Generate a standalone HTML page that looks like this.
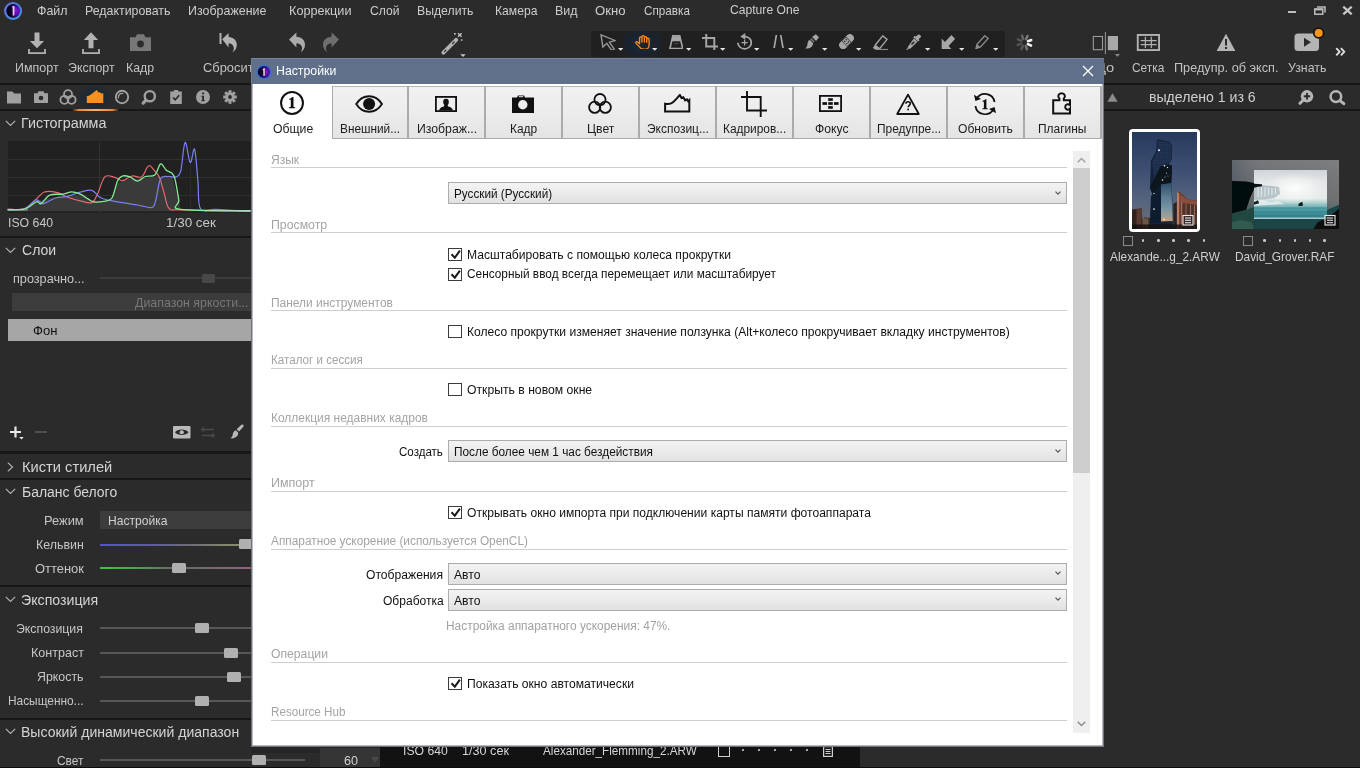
<!DOCTYPE html>
<html><head><meta charset="utf-8"><title>Capture One</title>
<style>
*{box-sizing:border-box;margin:0;padding:0}
html,body{width:1360px;height:768px;overflow:hidden;background:#2b2b2b}
body{font-family:"Liberation Sans",sans-serif;position:relative}
.a{position:absolute;display:block}
.t{position:absolute;white-space:nowrap;line-height:1;transform-origin:0 0}
</style></head>
<body>
<svg class="a" style="left:2.7px;top:0.9px;" width="20" height="20" viewBox="0 0 20 20"><defs><radialGradient id="lg" cx="0.68" cy="0.5" r="0.62"><stop offset="0" stop-color="#8a10d8"/><stop offset="0.4" stop-color="#5a10b8"/><stop offset="0.75" stop-color="#160c50"/><stop offset="1" stop-color="#050418"/></radialGradient>
<linearGradient id="lr" x1="0" y1="0" x2="1" y2="1"><stop offset="0" stop-color="#7a6ad8"/><stop offset=".45" stop-color="#4a80e8"/><stop offset="1" stop-color="#4a9ad8"/></linearGradient></defs>
<circle cx="10" cy="10" r="9" fill="url(#lr)"/><circle cx="10.200" cy="9.800" r="6.900" fill="url(#lg)"/><ellipse cx="7.300" cy="10.200" rx="3.600" ry="5" fill="#04030f" opacity=".8"/>
<path d="M9 5.600c1.100-.9 2.300-.9 2.600 0l-.3 9h-1.600l-.1-7.500z" fill="#f2c4f4"/></svg>
<div class="t" style="left:36.8px;top:3.8px;font-size:13.5px;color:#cdcdcd;transform:scaleX(0.9182);">Файл</div>
<div class="t" style="left:85.3px;top:3.8px;font-size:13.5px;color:#cdcdcd;transform:scaleX(0.9166);">Редактировать</div>
<div class="t" style="left:188.3px;top:3.8px;font-size:13.5px;color:#cdcdcd;transform:scaleX(0.9230);">Изображение</div>
<div class="t" style="left:289.2px;top:3.8px;font-size:13.5px;color:#cdcdcd;transform:scaleX(0.9384);">Коррекции</div>
<div class="t" style="left:370.3px;top:3.8px;font-size:13.5px;color:#cdcdcd;transform:scaleX(0.8972);">Слой</div>
<div class="t" style="left:417.3px;top:3.8px;font-size:13.5px;color:#cdcdcd;transform:scaleX(0.9067);">Выделить</div>
<div class="t" style="left:495.3px;top:3.8px;font-size:13.5px;color:#cdcdcd;transform:scaleX(0.8998);">Камера</div>
<div class="t" style="left:555.3px;top:3.8px;font-size:13.5px;color:#cdcdcd;transform:scaleX(0.9203);">Вид</div>
<div class="t" style="left:595.2px;top:3.8px;font-size:13.5px;color:#cdcdcd;transform:scaleX(0.9746);">Окно</div>
<div class="t" style="left:643.8px;top:3.8px;font-size:13.5px;color:#cdcdcd;transform:scaleX(0.8666);">Справка</div>
<div class="t" style="left:730.3px;top:3.2px;font-size:13.5px;color:#cdcdcd;transform:scaleX(0.8986);">Capture One</div>
<div class="a" style="left:1288px;top:11px;width:8px;height:2px;background:#bdbdbd;"></div>
<svg class="a" style="left:1314px;top:5.5px;" width="12" height="9" viewBox="0 0 12 9"><path d="M3 1h8v5.500" fill="none" stroke="#bdbdbd" stroke-width="1.500"/><rect x=".75" y="3" width="8" height="5.200" fill="none" stroke="#bdbdbd" stroke-width="1.500"/><rect x=".75" y="2.600" width="8" height="1.800" fill="#bdbdbd"/></svg>
<svg class="a" style="left:1341.5px;top:5.5px;" width="11" height="9" viewBox="0 0 11 9"><path d="M1.3 0.7l8.400 7.600M9.700 0.700l-8.400 7.600" stroke="#c6c6c6" stroke-width="2.300" fill="none"/></svg>
<div class="t" style="left:14.6px;top:60.5px;font-size:13.5px;color:#c2c2c2;transform:scaleX(0.9236);">Импорт</div>
<div class="t" style="left:67.6px;top:60.5px;font-size:13.5px;color:#c2c2c2;transform:scaleX(0.9183);">Экспорт</div>
<div class="t" style="left:126.3px;top:60.5px;font-size:13.5px;color:#c2c2c2;transform:scaleX(0.9092);">Кадр</div>
<div class="t" style="left:202.5px;top:60.5px;font-size:13.5px;color:#c2c2c2;transform:scaleX(0.9538);">Сбросить</div>
<div class="t" style="left:1096.1px;top:60.5px;font-size:13.5px;color:#c2c2c2;transform:scaleX(1.0861);">До</div>
<div class="t" style="left:1131.8px;top:60.5px;font-size:13.5px;color:#c2c2c2;transform:scaleX(0.8808);">Сетка</div>
<div class="t" style="left:1173.5px;top:60.5px;font-size:13.5px;color:#c2c2c2;transform:scaleX(0.9397);">Предупр. об эксп.</div>
<div class="t" style="left:1288.3px;top:60.5px;font-size:13.5px;color:#c2c2c2;transform:scaleX(0.9184);">Узнать</div>
<svg class="a" style="left:28px;top:32px;" width="18" height="23" viewBox="0 0 18 23"><path d="M6.5 0.5h5v8.5h4.6L9 16.3 1.9 9h4.6z" fill="#b2b2b2"/><path d="M1 17v4.2h16V17" fill="none" stroke="#b2b2b2" stroke-width="1.8"/></svg>
<svg class="a" style="left:82px;top:32px;" width="18" height="23" viewBox="0 0 18 23"><path d="M9 0.3l7.1 7.6h-4.6v8.4h-5V7.9H1.9z" fill="#b2b2b2"/><path d="M1 17v4.2h16V17" fill="none" stroke="#b2b2b2" stroke-width="1.8"/></svg>
<svg class="a" style="left:130px;top:34px;" width="21" height="17" viewBox="0 0 21 17"><path d="M0 3.2h5.5l1.6-2.9h6.8l1.6 2.9H21V17H0z" fill="#777"/><circle cx="10.5" cy="10" r="3.4" fill="#2b2b2b"/><circle cx="10.5" cy="10" r="1.9" fill="#777" opacity="0"/></svg>
<svg class="a" style="left:219px;top:32px;" width="19" height="21" viewBox="0 0 19 21"><rect x="0.5" y="1" width="2" height="11" fill="#b2b2b2"/><path d="M3.2 7.2L9.6 1v4c5 .3 8.2 3.4 8.2 7.8 0 3.6-2 6.3-4.4 7.6 1.5-2.2 1.9-4.6.8-6.500-1-1.800-2.600-2.500-4.600-2.600v4.100z" fill="#b2b2b2"/></svg>
<svg class="a" style="left:288px;top:32px;" width="19" height="21" viewBox="0 0 19 21"><path d="M1 7.400L8.400 0.600v4.200c5.500.3 8.600 3.600 8.600 7.900 0 3.500-1.900 6.100-4.300 7.400 1.500-2.300 1.800-4.600.7-6.400-1-1.700-2.700-2.400-5-2.500v4.200z" fill="#ababab"/></svg>
<svg class="a" style="left:321px;top:32px;" width="19" height="21" viewBox="0 0 19 21"><path d="M18 7.400L10.600 0.600v4.200C5.100 5.100 2 8.400 2 12.700c0 3.500 1.900 6.100 4.300 7.400-1.500-2.300-1.800-4.600-.7-6.400 1-1.700 2.700-2.400 5-2.500v4.200z" fill="#6e6e6e"/></svg>
<svg class="a" style="left:440px;top:31px;" width="30" height="26" viewBox="0 0 30 26"><path d="M3.400 21.700L16.200 8.900" stroke="#b2b2b2" stroke-width="3.900" stroke-linecap="round"/><path d="M4.600 20.500l1.300-1.300M12.600 12.500l1.600-1.600" stroke="#2b2b2b" stroke-width="1.200" stroke-linecap="round"/><path d="M18 2.200l3.600 3.600M21.600 2.200L18 5.800" stroke="#c4c4c4" stroke-width="1.300"/><rect x="14" y="2" width="1.700" height="1.700" fill="#c0c0c0"/><rect x="20.800" y="8.200" width="1.700" height="1.700" fill="#a8a8a8"/><path d="M20.300 23.300h5.400l-2.700 2.700z" fill="#c8c8c8"/></svg>
<div class="a" style="left:591px;top:31px;width:414px;height:26px;background:#202020;border-radius:3px"></div>
<div class="a" style="left:624px;top:31px;width:37px;height:26px;background:radial-gradient(ellipse at 50% 50%,#172838 0%,#182432 45%,rgba(32,32,32,0) 100%)"></div>
<svg class="a" style="left:617.9px;top:48px;" width="5.4" height="2.8" viewBox="0 0 5.4 2.8"><path d="M0 0h5.400L2.700 2.800z" fill="#e6e6e6"/></svg>
<svg class="a" style="left:651.98px;top:48px;" width="5.4" height="2.8" viewBox="0 0 5.4 2.8"><path d="M0 0h5.400L2.700 2.800z" fill="#e6e6e6"/></svg>
<svg class="a" style="left:686.06px;top:48px;" width="5.4" height="2.8" viewBox="0 0 5.4 2.8"><path d="M0 0h5.400L2.700 2.800z" fill="#e6e6e6"/></svg>
<svg class="a" style="left:720.14px;top:48px;" width="5.4" height="2.8" viewBox="0 0 5.4 2.8"><path d="M0 0h5.400L2.700 2.800z" fill="#e6e6e6"/></svg>
<svg class="a" style="left:754.22px;top:48px;" width="5.4" height="2.8" viewBox="0 0 5.4 2.8"><path d="M0 0h5.400L2.700 2.800z" fill="#e6e6e6"/></svg>
<svg class="a" style="left:788.3px;top:48px;" width="5.4" height="2.8" viewBox="0 0 5.4 2.8"><path d="M0 0h5.400L2.700 2.800z" fill="#e6e6e6"/></svg>
<svg class="a" style="left:822.38px;top:48px;" width="5.4" height="2.8" viewBox="0 0 5.4 2.8"><path d="M0 0h5.400L2.700 2.800z" fill="#e6e6e6"/></svg>
<svg class="a" style="left:856.46px;top:48px;" width="5.4" height="2.8" viewBox="0 0 5.4 2.8"><path d="M0 0h5.400L2.700 2.800z" fill="#e6e6e6"/></svg>
<svg class="a" style="left:924.6199999999999px;top:48px;" width="5.4" height="2.8" viewBox="0 0 5.4 2.8"><path d="M0 0h5.400L2.700 2.800z" fill="#e6e6e6"/></svg>
<svg class="a" style="left:958.6999999999999px;top:48px;" width="5.4" height="2.8" viewBox="0 0 5.4 2.8"><path d="M0 0h5.400L2.700 2.800z" fill="#e6e6e6"/></svg>
<svg class="a" style="left:992.78px;top:48px;" width="5.4" height="2.8" viewBox="0 0 5.4 2.8"><path d="M0 0h5.400L2.700 2.800z" fill="#e6e6e6"/></svg>
<svg class="a" style="left:600px;top:33.7px" width="16.00" height="16.60" viewBox="1 0.500 15.500 18.500" preserveAspectRatio="none"><path d="M2 1.500l13.500 6.300-5.400 1.700 4.700 7.700-2.500 1.500-4.700-7.800-3.800 4.100z" fill="none" stroke="#959595" stroke-width="1.400" stroke-linejoin="miter"/></svg>
<svg class="a" style="left:634.6px;top:34.6px" width="15.20" height="14.70" viewBox="0.300 0.300 14 14.400" preserveAspectRatio="none"><path d="M4.500 9V3.200a1.100 1.100 0 0 1 2.200 0V7.200M6.700 3.400V2.100a1.100 1.100 0 0 1 2.200 0V7.200M8.900 2.900a1.100 1.100 0 0 1 2.200 0V7.400M11.100 4.400a1.100 1.100 0 0 1 2.200 0V10c0 2.500-1.500 4.200-3.800 4.200H8c-1.600 0-2.600-.8-3.400-2L1.200 8.200c-.6-1 .8-1.900 1.600-1L4.500 9" fill="#1a2430" stroke="#f58a1f" stroke-width="1.250" stroke-linejoin="round" stroke-linecap="round"/></svg>
<svg class="a" style="left:668.7px;top:34.6px" width="14.60" height="14.40" viewBox="0 0 17 17.500" preserveAspectRatio="none"><path d="M4.500 1h8l3.500 15.500H1z" fill="none" stroke="#a6a6a6" stroke-width="1.900"/><path d="M4.300 1.500h8.400l1.400 6H2.900z" fill="#a6a6a6"/><path d="M6 10.500h5" stroke="#555" stroke-width="1"/></svg>
<svg class="a" style="left:701.9px;top:33.7px" width="16.10" height="16.60" viewBox="0 0 19 20.500" preserveAspectRatio="none"><path d="M5 0v15.500h14M0 5h14.500v15.500" fill="none" stroke="#a6a6a6" stroke-width="2.300"/></svg>
<svg class="a" style="left:737px;top:33.3px" width="15.20" height="16.90" viewBox="0.500 0 17 20.500" preserveAspectRatio="none"><path d="M9 4.200a7.500 7.500 0 1 1-7.500 7.500" fill="none" stroke="#a6a6a6" stroke-width="2"/><path d="M9.800 0v8.300L4.300 4.100z" fill="#a6a6a6"/><path d="M9 8.300v6.800M5.600 11.700h6.800" stroke="#a6a6a6" stroke-width="1.400"/></svg>
<svg class="a" style="left:772.6px;top:34.5px" width="11.20" height="13.40" viewBox="0 0 12.500 16.500" preserveAspectRatio="none"><path d="M3.800 0L1.200 16.500M8.600 0l2.700 16.500" stroke="#a6a6a6" stroke-width="1.900" fill="none"/></svg>
<svg class="a" style="left:805.3px;top:34.1px" width="14.20" height="14.70" viewBox="0 0 16.500 17" preserveAspectRatio="none"><path d="M12.600 0.200l3.600 3.600-3.300 4.400-4.700-4.700z" fill="#a6a6a6"/><path d="M7.300 4.700l3.900 3.900-1.300 1.300-3.900-3.900z" fill="#777"/><path d="M5.400 6.600l3.900 3.900c.2 2.300-.8 4-2.700 5-1.800 1-4.300 1.700-6.400.9 1.600-.7 2.200-1.700 2.500-3.600.3-2.300.6-5 2.700-6.200z" fill="#a6a6a6"/></svg>
<svg class="a" style="left:839px;top:33.7px" width="15.00" height="15.30" viewBox="0 0 18 18" preserveAspectRatio="none"><g transform="rotate(-45 9 9)"><rect x="-1.500" y="4.200" width="21" height="9.600" rx="4.800" fill="#a6a6a6"/><rect x="5.200" y="4.200" width="7.600" height="9.600" fill="#3a3a3a"/><rect x="5.900" y="5" width="6.200" height="8" fill="#a6a6a6"/><circle cx="7.700" cy="7.200" r=".95" fill="#333"/><circle cx="10.400" cy="7.200" r=".95" fill="#333"/><circle cx="7.700" cy="10.800" r=".95" fill="#333"/><circle cx="10.400" cy="10.800" r=".95" fill="#333"/></g></svg>
<svg class="a" style="left:872px;top:34.5px" width="16.30" height="15.70" viewBox="0 0 18 17.300" preserveAspectRatio="none"><path d="M11.800 1l4.900 3.800-8.300 10.300-4.900-3.800z" fill="none" stroke="#a6a6a6" stroke-width="1.500"/><path d="M3.500 11.300l4.900 3.800-1 1.200H3.800L.8 14z" fill="#a6a6a6"/><path d="M5 16.300h13" stroke="#8a8a8a" stroke-width="1.900"/></svg>
<svg class="a" style="left:905.7px;top:33.7px" width="16.40" height="16.50" viewBox="0 0 18 20.300" preserveAspectRatio="none"><path d="M13.200.9c1.500-1.200 4.200 1.500 3 3l-2.300 2.700 1 1-1.700 1.700-5.300-5.300 1.700-1.700 1 1z" fill="#a6a6a6"/><path d="M8.600 5.600l4 4-7.700 8.200-2.600.8-1.300 1.600-.9-.9 1.500-1.400.7-2.600z" fill="#a6a6a6"/><path d="M6 13l3.200-3.400" stroke="#222" stroke-width="1.600"/></svg>
<svg class="a" style="left:940.7px;top:34.7px" width="14.30" height="14.50" viewBox="0 0 17 16" preserveAspectRatio="none"><path d="M16.800 4.200L9 12l3.800 3.800H.8V3.800l3.800 3.800L12.400 0z" fill="#a6a6a6"/></svg>
<svg class="a" style="left:974.6px;top:35px" width="14.40" height="14.20" viewBox="0 0 18 19" preserveAspectRatio="none"><path d="M12.200 1l4.300 3.500-9.700 11.600-5.600 2.200 1.300-5.800z" fill="none" stroke="#8c8c8c" stroke-width="1.700"/><path d="M1.200 18.300l1.300-5.800 4.300 3.600z" fill="#8c8c8c"/><path d="M8 7.500l3.500 2.800-2.800 3.400-3.500-2.800z" fill="#333" opacity="0"/></svg>
<svg class="a" style="left:1016px;top:34px;" width="17" height="17" viewBox="0 0 17 17"><g transform="translate(8.500 8.500)"><rect x="2.600" y="-1.250" width="5.800" height="2.500" rx="1" fill="#f2f2f2" opacity="1" transform="rotate(-20)"/><rect x="2.600" y="-1.250" width="5.800" height="2.500" rx="1" fill="#f2f2f2" opacity="1" transform="rotate(25)"/><rect x="2.600" y="-1.250" width="5.800" height="2.500" rx="1" fill="#f2f2f2" opacity="0.35" transform="rotate(70)"/><rect x="2.600" y="-1.250" width="5.800" height="2.500" rx="1" fill="#f2f2f2" opacity="0.22" transform="rotate(115)"/><rect x="2.600" y="-1.250" width="5.800" height="2.500" rx="1" fill="#f2f2f2" opacity="0.2" transform="rotate(160)"/><rect x="2.600" y="-1.250" width="5.800" height="2.500" rx="1" fill="#f2f2f2" opacity="0.22" transform="rotate(205)"/><rect x="2.600" y="-1.250" width="5.800" height="2.500" rx="1" fill="#f2f2f2" opacity="0.3" transform="rotate(250)"/><rect x="2.600" y="-1.250" width="5.800" height="2.500" rx="1" fill="#f2f2f2" opacity="0.4" transform="rotate(295)"/></g></svg>
<svg class="a" style="left:1092px;top:31px;" width="29" height="27" viewBox="0 0 29 27"><rect x="1.300" y="5.500" width="9.200" height="13.200" fill="none" stroke="#9c9c9c" stroke-width="1.100"/><rect x="15.800" y="5" width="10.200" height="14.200" fill="#a8a8a8"/><path d="M13.400 0.900v22.300" stroke="#8e8e8e" stroke-width="1.100"/><path d="M22.800 23h5.200l-2.600 2.800z" fill="#8a8a8a"/></svg>
<svg class="a" style="left:1136px;top:33px;" width="25" height="19" viewBox="0 0 25 19"><rect x="1.750" y="1.950" width="21.300" height="15.100" fill="none" stroke="#b2b2b2" stroke-width="1.900"/><path d="M4.700 7.700h15.900M4.700 11.600h15.900M9.400 3.800v11.200M15.300 3.800v11.200" stroke="#b2b2b2" stroke-width="1.200" fill="none"/></svg>
<svg class="a" style="left:1216px;top:33px;" width="20" height="19" viewBox="0 0 20 19"><path d="M10 .8L19.400 18H.6z" fill="#b4b4b4"/><rect x="9" y="6" width="2" height="6.500" fill="#2b2b2b"/><rect x="9" y="14" width="2" height="2" fill="#2b2b2b"/></svg>
<svg class="a" style="left:1294px;top:27px;" width="32" height="26" viewBox="0 0 32 26"><rect x="0.500" y="6.500" width="24.500" height="17.500" rx="3.500" fill="#b4b4b4"/><path d="M10 10.800l7 4.500-7 4.500z" fill="#2b2b2b"/><circle cx="24.700" cy="6" r="5.800" fill="#1c1410"/><circle cx="24.700" cy="6" r="4" fill="#f7941d"/></svg>
<svg class="a" style="left:1335px;top:46.700px" width="11" height="9.500" viewBox="0 0 13 11"><path d="M1.500 1.200l4 4.300-4 4.300M7 1.200l4 4.300-4 4.300" fill="none" stroke="#dcdcdc" stroke-width="2.200"/></svg>
<div class="a" style="left:0px;top:83px;width:1360px;height:2px;background:#171717;"></div>
<div class="a" style="left:0px;top:109px;width:251px;height:2px;background:#171717;"></div>
<svg class="a" style="left:4.0px;top:88.0px;" width="20" height="18" viewBox="0 0 20 18"><path d="M3 3.500h5.500l1.500 2H17V15.500H3z" fill="#a0a0a0"/></svg>
<svg class="a" style="left:31.0px;top:88.0px;" width="20" height="18" viewBox="0 0 20 18"><path d="M3 5.200h3.500l1-1.900h5l1 1.900H17V15H3z" fill="#a0a0a0"/><circle cx="10" cy="10" r="2.300" fill="#2b2b2b"/></svg>
<svg class="a" style="left:58.0px;top:88.0px;" width="20" height="18" viewBox="0 0 20 18"><g fill="none" stroke="#a0a0a0" stroke-width="1.800"><circle cx="10" cy="6.200" r="4"/><circle cx="6.400" cy="11.800" r="4"/><circle cx="13.600" cy="11.800" r="4"/></g></svg>
<div class="a" style="left:78px;top:85px;width:34px;height:24px;background:radial-gradient(ellipse at 50% 55%,#182a3c 0%,#1b2936 40%,rgba(43,43,43,0) 75%)"></div>
<svg class="a" style="left:85.0px;top:88.0px;" width="20" height="18" viewBox="0 0 20 18"><path d="M1.800 15V8.200l2.700-.7 4-3 3.100-2.400 2 2.500 1.400-.4 1.300 1.400 2-.4V15z" fill="#f8901e"/></svg>
<svg class="a" style="left:112.0px;top:88.0px;" width="20" height="18" viewBox="0 0 20 18"><circle cx="10" cy="9" r="6.200" fill="none" stroke="#a0a0a0" stroke-width="1.900"/><path d="M6.600 10.200a3.500 3.500 0 0 1 4.600-4.500" fill="none" stroke="#a0a0a0" stroke-width="1.300"/></svg>
<svg class="a" style="left:139.0px;top:88.0px;" width="20" height="18" viewBox="0 0 20 18"><circle cx="10.800" cy="8.200" r="5.100" fill="none" stroke="#a0a0a0" stroke-width="2.400"/><path d="M7 12.200l-2.800 2.900" stroke="#a0a0a0" stroke-width="3.200" stroke-linecap="round"/></svg>
<svg class="a" style="left:166.0px;top:88.0px;" width="20" height="18" viewBox="0 0 20 18"><path d="M4.200 3.500h3.300l.6-1.500h3.800l.6 1.500h3.300V16H4.200z" fill="#a0a0a0"/><path d="M7 9.500l2.200 2.300 4-4.500" fill="none" stroke="#2b2b2b" stroke-width="1.700"/></svg>
<svg class="a" style="left:193.0px;top:88.0px;" width="20" height="18" viewBox="0 0 20 18"><circle cx="10" cy="9" r="7" fill="#a0a0a0"/><rect x="9.200" y="7.800" width="1.800" height="5.200" fill="#2b2b2b"/><rect x="8.300" y="7.800" width="2" height="1" fill="#2b2b2b"/><rect x="8.300" y="12.200" width="3.600" height="1" fill="#2b2b2b"/><circle cx="10.100" cy="5.300" r="1.150" fill="#2b2b2b"/></svg>
<svg class="a" style="left:220.0px;top:88.0px;" width="20" height="18" viewBox="0 0 20 18"><g transform="translate(10 9)"><rect x="-1.500" y="-6.800" width="3" height="4" fill="#a0a0a0" transform="rotate(0)"/><rect x="-1.500" y="-6.800" width="3" height="4" fill="#a0a0a0" transform="rotate(45)"/><rect x="-1.500" y="-6.800" width="3" height="4" fill="#a0a0a0" transform="rotate(90)"/><rect x="-1.500" y="-6.800" width="3" height="4" fill="#a0a0a0" transform="rotate(135)"/><rect x="-1.500" y="-6.800" width="3" height="4" fill="#a0a0a0" transform="rotate(180)"/><rect x="-1.500" y="-6.800" width="3" height="4" fill="#a0a0a0" transform="rotate(225)"/><rect x="-1.500" y="-6.800" width="3" height="4" fill="#a0a0a0" transform="rotate(270)"/><rect x="-1.500" y="-6.800" width="3" height="4" fill="#a0a0a0" transform="rotate(315)"/><circle r="4.700" fill="#a0a0a0"/><circle r="1.900" fill="#2b2b2b"/></g></svg>
<div class="a" style="left:72px;top:108.500px;width:47px;height:2.800px;border-radius:1.400px;background:linear-gradient(90deg,rgba(200,110,40,0) 0%,#e08a3c 14%,#f6b274 50%,#e08a3c 86%,rgba(200,110,40,0) 100%)"></div>
<svg class="a" style="left:5px;top:120px;" width="11" height="7" viewBox="0 0 11 7"><path d="M0.800 0.800l4.700 4.700 4.700-4.700" fill="none" stroke="#b4b4b4" stroke-width="1.150"/></svg>
<div class="t" style="left:21.1px;top:115.8px;font-size:14px;color:#d4d4d4;transform:scaleX(1.0245);">Гистограмма</div>
<div class="a" style="left:8px;top:141px;width:243px;height:72px;background:#212121;"></div>
<svg class="a" style="left:0px;top:110px;" width="251" height="105" viewBox="0 0 251 105"><path d="M7.600 49.5H251" stroke="#303030" stroke-width="1"/><path d="M7.600 67.5H251" stroke="#303030" stroke-width="1"/><path d="M7.600 85.5H251" stroke="#303030" stroke-width="1"/><path d="M99.500 31.500V103" stroke="#323232" stroke-width="1"/><path d="M190.500 31.500V103" stroke="#2a2a2a" stroke-width="1"/><polygon points="7.6,101.3 7.6,99.4 24.9,98.7 36.3,91.4 49.7,88.0 63.1,86.4 80.3,85.1 91.8,89.9 103.3,91.4 111.9,88.3 117.6,72.7 130.0,68.8 145.3,67.9 158.7,66.0 172.1,66.9 176.9,84.1 180.7,99.4 200.8,99.8 250.5,101.3" fill="#3a3a3a"/><path d="M7.6 99.4C10.5 99.3 20.1 100.2 24.9 98.5C29.6 96.7 33.0 91.7 36.3 88.9C39.7 86.1 41.4 82.9 44.9 81.8C48.4 80.8 53.7 81.7 57.4 82.6C61.0 83.5 63.1 85.6 66.9 87.0C70.7 88.4 76.2 89.9 80.3 90.8C84.4 91.8 88.9 93.8 91.8 92.7C94.6 91.6 95.3 88.4 97.5 84.1C99.7 79.8 101.9 69.7 104.8 66.9C107.6 64.1 111.8 66.7 114.7 67.3C117.7 67.9 119.5 71.0 122.4 70.7C125.2 70.5 128.7 66.6 131.9 66.0C135.1 65.3 138.9 68.4 141.5 66.9C144.0 65.5 145.8 59.2 147.2 57.4C148.7 55.5 148.8 55.2 150.1 55.8C151.4 56.5 153.3 59.2 154.9 61.2C156.5 63.2 158.1 64.1 159.7 67.9C161.2 71.7 162.8 79.0 164.4 84.1C166.0 89.2 166.3 95.9 169.2 98.5C172.1 101.1 168.1 99.4 181.6 99.8C195.2 100.2 239.0 100.8 250.5 101.0" fill="none" stroke="#e8686f" stroke-width="1.200" stroke-linejoin="round"/><path d="M7.6 99.4C10.5 99.3 20.1 100.1 24.9 98.5C29.6 96.9 33.3 90.7 36.3 89.9C39.4 89.1 39.8 94.0 43.0 93.7C46.2 93.4 51.5 89.2 55.4 88.0C59.4 86.7 62.8 87.4 66.9 86.4C71.1 85.5 76.2 83.2 80.3 82.2C84.4 81.2 88.6 79.5 91.8 80.3C95.0 81.1 96.9 85.4 99.4 87.0C102.0 88.6 103.3 88.9 107.1 89.9C110.9 90.8 117.3 91.9 122.4 92.7C127.5 93.6 132.7 94.2 137.7 95.0C142.6 95.8 149.0 98.4 152.0 97.5C155.0 96.7 154.4 94.6 155.8 89.9C157.3 85.1 158.5 72.7 160.6 68.8C162.7 64.9 165.7 66.9 168.3 66.5C170.8 66.2 173.8 67.8 175.9 66.9C178.0 66.0 179.2 66.9 180.7 61.2C182.2 55.4 183.5 33.9 185.1 32.5C186.7 31.1 188.7 51.5 190.2 52.6C191.8 53.7 193.4 36.2 194.6 39.2C195.9 42.2 196.9 60.9 197.9 70.7C198.9 80.6 197.4 93.7 200.4 98.5C203.4 103.3 207.7 98.9 216.1 99.4C224.4 99.9 244.7 101.0 250.5 101.3" fill="none" stroke="#7a80f2" stroke-width="1.200" stroke-linejoin="round"/><path d="M7.6 99.8C10.5 99.7 20.1 100.4 24.9 99.0C29.6 97.7 33.6 92.7 36.3 91.8C39.0 90.9 38.9 94.8 41.1 93.7C43.3 92.6 46.0 86.7 49.7 85.1C53.4 83.5 59.4 84.7 63.1 84.1C66.8 83.6 68.8 81.8 71.7 81.8C74.6 81.8 77.6 83.0 80.3 84.1C83.0 85.3 85.7 87.6 88.0 88.9C90.2 90.2 91.1 91.4 93.7 91.8C96.2 92.2 100.2 92.0 103.3 91.4C106.3 90.8 109.5 91.4 111.9 88.0C114.2 84.5 115.8 74.4 117.6 70.7C119.3 67.1 120.3 66.6 122.4 66.0C124.4 65.3 127.5 66.1 130.0 66.9C132.6 67.8 135.1 71.2 137.7 71.1C140.2 71.1 142.4 67.6 145.3 66.5C148.2 65.5 152.3 67.1 154.9 65.0C157.4 62.9 158.7 54.7 160.6 53.9C162.5 53.1 164.1 58.2 166.3 60.2C168.6 62.2 171.9 61.0 174.0 66.0C176.1 70.9 177.7 84.3 178.8 89.9C179.9 95.4 168.7 97.6 180.7 99.4C192.6 101.3 238.8 100.7 250.5 101.0" fill="none" stroke="#86ec94" stroke-width="1.300" stroke-linejoin="round"/><path d="M7.600 100H28M205 100.800H251" stroke="#dcdce0" stroke-width="1" opacity=".6"/></svg>
<div class="t" style="left:7.9px;top:216.6px;font-size:12.5px;color:#c6c6c6;transform:scaleX(0.9825);">ISO 640</div>
<div class="t" style="left:165.9px;top:216.6px;font-size:12.5px;color:#c6c6c6;transform:scaleX(1.0737);">1/30 сек</div>
<div class="a" style="left:0px;top:236px;width:251px;height:2px;background:#171717;"></div>
<svg class="a" style="left:5px;top:247px;" width="11" height="7" viewBox="0 0 11 7"><path d="M0.800 0.800l4.700 4.700 4.700-4.700" fill="none" stroke="#b4b4b4" stroke-width="1.150"/></svg>
<div class="t" style="left:21.7px;top:242.7px;font-size:14px;color:#d4d4d4;transform:scaleX(1.0041);">Слои</div>
<div class="t" style="left:12.6px;top:271.8px;font-size:13px;color:#c6c6c6;transform:scaleX(0.9742);">прозрачно...</div>
<div class="a" style="left:100px;top:277px;width:151px;height:2px;background:#3c3c3c;"></div>
<div class="a" style="left:202px;top:273.5px;width:13px;height:9px;background:#484848;border-radius:1.500px"></div>
<div class="a" style="left:12px;top:293px;width:239px;height:18px;background:#3c3c3c;"></div>
<div class="t" style="left:135.3px;top:296.0px;font-size:13px;color:#787878;transform:scaleX(0.9525);">Диапазон яркости...</div>
<div class="a" style="left:8px;top:319px;width:243px;height:22px;background:#a6a6a6;"></div>
<div class="t" style="left:32.7px;top:324.6px;font-size:12.5px;color:#101010;transform:scaleX(1.0476);">Фон</div>
<svg class="a" style="left:9px;top:425px;" width="15" height="15" viewBox="0 0 15 15"><path d="M6.500 1.500v11M1 7h11" stroke="#e8e8e8" stroke-width="2.200"/><path d="M10.200 12h4.500l-2.250 2.500z" fill="#e8e8e8"/></svg>
<div class="a" style="left:34.5px;top:431px;width:12.5px;height:2px;background:#505050;"></div>
<svg class="a" style="left:173px;top:426px;" width="18" height="13" viewBox="0 0 18 13"><rect width="17.500" height="12.500" fill="#bababa" rx="1"/><path d="M2 6.250C4.500 2.600 13 2.600 15.500 6.250 13 9.900 4.500 9.900 2 6.250z" fill="#2b2b2b"/><circle cx="8.750" cy="6.250" r="2.100" fill="#bababa"/></svg>
<svg class="a" style="left:201px;top:426px;" width="14" height="13" viewBox="0 0 14 13"><path d="M1 3.500h12M1 9.500h12" stroke="#4a4a4a" stroke-width="1.400"/><path d="M3 1.500l-2.200 2 2.200 2M11 7.500l2.200 2-2.200 2" fill="none" stroke="#4a4a4a" stroke-width="1.300"/></svg>
<svg class="a" style="left:229px;top:424px;" width="16" height="16" viewBox="0 0 16 16"><path d="M14.200.7c.7.600.5 1.500-.1 2.200L10 7.600 7.700 5.300l4.400-4.300c.6-.6 1.500-.8 2.100-.3zM6.800 6.200l2.300 2.300c.3 2-.5 3.600-2.200 4.500-1.500.9-3.700 2-5.500 1 1.400-.4 2-1.200 2.200-2.900.2-1.900 1.100-4.100 3.200-4.900z" fill="#b8b8b8"/></svg>
<div class="a" style="left:0px;top:451px;width:251px;height:3px;background:#171717;"></div>
<svg class="a" style="left:7px;top:462px;" width="7" height="10" viewBox="0 0 7 10"><path d="M0.800 0.600l4.700 4.400-4.700 4.400" fill="none" stroke="#b4b4b4" stroke-width="1.150"/></svg>
<div class="t" style="left:21.6px;top:459.5px;font-size:14px;color:#d4d4d4;transform:scaleX(1.0482);">Кисти стилей</div>
<div class="a" style="left:0px;top:478px;width:251px;height:2px;background:#171717;"></div>
<svg class="a" style="left:5px;top:488px;" width="11" height="7" viewBox="0 0 11 7"><path d="M0.800 0.800l4.700 4.700 4.700-4.700" fill="none" stroke="#b4b4b4" stroke-width="1.150"/></svg>
<div class="t" style="left:21.7px;top:485.0px;font-size:14px;color:#d4d4d4;transform:scaleX(0.9973);">Баланс белого</div>
<div class="t" style="left:43.6px;top:513.9px;font-size:13px;color:#c6c6c6;transform:scaleX(0.9913);">Режим</div>
<div class="a" style="left:100px;top:511px;width:151px;height:18px;background:#3c3c3c;"></div>
<div class="t" style="left:107.9px;top:513.9px;font-size:13px;color:#d0d0d0;transform:scaleX(0.9305);">Настройка</div>
<div class="t" style="left:35.6px;top:537.8px;font-size:13px;color:#c6c6c6;transform:scaleX(0.9543);">Кельвин</div>
<div class="a" style="left:100px;top:543.500px;width:151px;height:2px;background:linear-gradient(90deg,#5454d2 0%,#5c5ca0 33%,#6c6c7a 58%,#86866e 85%,#90906a 100%)"></div>
<div class="a" style="left:239px;top:539px;width:14px;height:10px;background:#b0b0b0;border-radius:1.500px"></div>
<div class="t" style="left:35.0px;top:561.7px;font-size:13px;color:#c6c6c6;transform:scaleX(0.9949);">Оттенок</div>
<div class="a" style="left:100px;top:567px;width:151px;height:2px;background:linear-gradient(90deg,#3cc83c 0%,#56925a 33%,#626e62 46%,#6a6a6a 60%,#7c6a74 80%,#8e6480 100%)"></div>
<div class="a" style="left:172px;top:563px;width:14px;height:10px;background:#b0b0b0;border-radius:1.500px"></div>
<div class="a" style="left:0px;top:585px;width:251px;height:2px;background:#171717;"></div>
<svg class="a" style="left:5px;top:596px;" width="11" height="7" viewBox="0 0 11 7"><path d="M0.800 0.800l4.700 4.700 4.700-4.700" fill="none" stroke="#b4b4b4" stroke-width="1.150"/></svg>
<div class="t" style="left:21.1px;top:593.0px;font-size:14px;color:#d4d4d4;transform:scaleX(1.0129);">Экспозиция</div>
<div class="t" style="left:16.2px;top:621.8px;font-size:13px;color:#c6c6c6;transform:scaleX(0.9448);">Экспозиция</div>
<div class="a" style="left:100px;top:627.3px;width:151px;height:2px;background:#575757;"></div>
<div class="a" style="left:195px;top:623.3px;width:14px;height:10px;background:#b0b0b0;border-radius:1.500px"></div>
<div class="t" style="left:30.5px;top:646.0px;font-size:13px;color:#c6c6c6;transform:scaleX(0.9644);">Контраст</div>
<div class="a" style="left:100px;top:651.5px;width:151px;height:2px;background:#575757;"></div>
<div class="a" style="left:224px;top:647.5px;width:14px;height:10px;background:#b0b0b0;border-radius:1.500px"></div>
<div class="t" style="left:37.3px;top:670.0px;font-size:13px;color:#c6c6c6;transform:scaleX(0.9501);">Яркость</div>
<div class="a" style="left:100px;top:675.5px;width:151px;height:2px;background:#575757;"></div>
<div class="a" style="left:227px;top:671.5px;width:14px;height:10px;background:#b0b0b0;border-radius:1.500px"></div>
<div class="t" style="left:7.5px;top:694.0px;font-size:13px;color:#c6c6c6;transform:scaleX(0.9136);">Насыщенно...</div>
<div class="a" style="left:100px;top:699.5px;width:151px;height:2px;background:#575757;"></div>
<div class="a" style="left:195px;top:695.5px;width:14px;height:10px;background:#b0b0b0;border-radius:1.500px"></div>
<div class="a" style="left:0px;top:717.5px;width:251px;height:2px;background:#171717;"></div>
<svg class="a" style="left:5px;top:728px;" width="11" height="7" viewBox="0 0 11 7"><path d="M0.800 0.800l4.700 4.700 4.700-4.700" fill="none" stroke="#b4b4b4" stroke-width="1.150"/></svg>
<div class="t" style="left:21.4px;top:725.2px;font-size:14px;color:#d4d4d4;transform:scaleX(1.0034);">Высокий динамический диапазон</div>
<div class="t" style="left:56.9px;top:753.7px;font-size:13px;color:#c6c6c6;transform:scaleX(0.9179);">Свет</div>
<div class="a" style="left:251px;top:746px;width:129px;height:7px;background:#252525;"></div>
<div class="a" style="left:100px;top:759px;width:205px;height:2px;background:#575757;"></div>
<div class="a" style="left:252px;top:755px;width:14px;height:10px;background:#b0b0b0;border-radius:1.500px"></div>
<div class="a" style="left:320px;top:748px;width:60px;height:20px;background:#353535;"></div>
<div class="t" style="left:343.7px;top:754.0px;font-size:13px;color:#d0d0d0;transform:scaleX(0.9683);">60</div>
<svg class="a" style="left:371px;top:757px;" width="8" height="6" viewBox="0 0 8 6"><path d="M0 0h8L4 6z" fill="#484848"/></svg>
<div class="a" style="left:380px;top:738px;width:480px;height:30px;background:#121212;"></div>
<div class="t" style="left:403.0px;top:743.8px;font-size:13.5px;color:#d4d4d4;transform:scaleX(0.9038);">ISO 640</div>
<div class="t" style="left:461.7px;top:743.8px;font-size:13.5px;color:#d4d4d4;transform:scaleX(0.9365);">1/30 сек</div>
<div class="t" style="left:543.0px;top:743.8px;font-size:13.5px;color:#d4d4d4;transform:scaleX(0.8655);">Alexander_Flemming_2.ARW</div>
<div class="a" style="left:718px;top:740px;width:12px;height:17px;background:none;border:1.500px solid #d0d0d0"></div>
<div class="a" style="left:741.5px;top:749px;width:2.2px;height:2.2px;background:#d8d8d8;border-radius:1px"></div>
<div class="a" style="left:757.5px;top:749px;width:2.2px;height:2.2px;background:#d8d8d8;border-radius:1px"></div>
<div class="a" style="left:773.5px;top:749px;width:2.2px;height:2.2px;background:#d8d8d8;border-radius:1px"></div>
<div class="a" style="left:789.5px;top:749px;width:2.2px;height:2.2px;background:#d8d8d8;border-radius:1px"></div>
<div class="a" style="left:805.5px;top:749px;width:2.2px;height:2.2px;background:#d8d8d8;border-radius:1px"></div>
<svg class="a" style="left:823px;top:746px;" width="10" height="11" viewBox="0 0 10 11"><rect x=".6" y=".6" width="8.800" height="9.800" fill="none" stroke="#cfcfcf" stroke-width="1.200"/><path d="M2.500 3.500h5M2.500 5.500h5M2.500 7.500h5" stroke="#cfcfcf" stroke-width="1"/></svg>
<div class="a" style="left:0px;top:767px;width:1360px;height:1px;background:#0c0c0c;"></div>
<div class="a" style="left:1104px;top:109px;width:256px;height:2px;background:#171717;"></div>
<svg class="a" style="left:1107px;top:93px;" width="11" height="9" viewBox="0 0 11 9"><path d="M5.500 0.300L10.600 8.800H0.400z" fill="#8c8c8c"/></svg>
<div class="t" style="left:1149.2px;top:89.5px;font-size:14.5px;color:#cfcfcf;transform:scaleX(0.9723);">выделено 1 из 6</div>
<svg class="a" style="left:1298px;top:89px;" width="17" height="17" viewBox="0 0 17 17"><circle cx="9" cy="7.300" r="6.200" fill="#b6b6b6"/><path d="M4.600 11.700l-2.600 2.600" stroke="#b6b6b6" stroke-width="3" stroke-linecap="round"/><path d="M9 4.100v6.400M5.800 7.300h6.400" stroke="#2b2b2b" stroke-width="1.900"/></svg>
<svg class="a" style="left:1328px;top:89px;" width="19" height="17" viewBox="0 0 19 17"><circle cx="7.900" cy="7.600" r="5.300" fill="none" stroke="#b6b6b6" stroke-width="2.500"/><path d="M12.300 11.800l3.500 2.900" stroke="#b6b6b6" stroke-width="3" stroke-linecap="round"/></svg>
<div class="a" style="left:1129px;top:129px;width:71px;height:103px;background:#ffffff;border-radius:4px"></div>
<svg class="a" style="left:1132px;top:132px;" width="65" height="97" viewBox="0 0 65 97"><defs><linearGradient id="sky" x1="0" y1="0" x2="0" y2="1"><stop offset="0" stop-color="#283a5c"/><stop offset=".4" stop-color="#3d4f72"/><stop offset=".7" stop-color="#55647e"/><stop offset=".88" stop-color="#626a7a"/><stop offset="1" stop-color="#4a4e58"/></linearGradient>
<linearGradient id="gl" x1="0" y1="0" x2="0" y2="1"><stop offset="0" stop-color="#2e4a66"/><stop offset=".35" stop-color="#58788e"/><stop offset=".7" stop-color="#7d99a6"/><stop offset=".9" stop-color="#a8a090"/><stop offset="1" stop-color="#d8a060"/></linearGradient>
<pattern id="gr" width="2.200" height="2" patternUnits="userSpaceOnUse"><path d="M0 0H2.200M0 0V2" stroke="#6a88a8" stroke-width=".35" opacity=".28"/></pattern>
<filter id="bl" x="-5%" y="-5%" width="110%" height="110%"><feGaussianBlur stdDeviation=".6"/></filter></defs>
<rect width="65" height="97" fill="url(#sky)"/>
<g filter="url(#bl)">
<polygon points="25.500,7.300 37.300,9.400 40,13.500 39.800,27.300 37.300,31.500 39.800,41.100 39.300,50.800 40.300,67.400 40.700,97 17.900,97 18.600,78.400 21.400,64.600 17.900,56.300 19,28.700 24.200,19 24.800,8.700" fill="#13213a"/>
<polygon points="25.800,8.500 37,10.300 39.300,14 39.200,27 36.500,31.500 30,34 22,46 20,30 25,19.500" fill="#1a2c48"/>
<polygon points="25.800,8.500 37,10.300 39.300,14 39.200,27 36.500,31.500 30,34 22,46 20,30 25,19.500" fill="url(#gr)"/>
<polygon points="29,52.200 39.300,50.800 40.700,89 29,89.500" fill="url(#gl)"/>
<polygon points="29,52.200 39.300,50.800 40.700,89 29,89.500" fill="url(#gr)" opacity=".6"/>
<polygon points="28.300,34.500 40,33 39.800,41.100 39.300,50.800 29,52.200 20.700,62 18.200,56" fill="#0c131c"/>
<polygon points="19,64 28.500,54 28.800,90 18,91" fill="#101c2e"/>
<polygon points="45,60 47.600,59.800 56.600,67.400 65,68 65,97 41.300,97 41.800,71 44.700,70" fill="#6e4036"/>
<polygon points="45,60 47.200,61.500 47,97 44.800,97" fill="#b88068"/>
<polygon points="48,63 56.600,68 65,69 65,73 48,70" fill="#8a4e40"/>
<polygon points="51,72 65,73 65,97 51,97" fill="#4e302c"/>
<path d="M49.500 70v27M54 72v25M58.500 73v24M62.500 73v24" stroke="#a87868" stroke-width=".8"/>
<polygon points="41.300,72 44.700,70 44.800,97 41.300,97" fill="#2a2428"/>
<polygon points="0,77.500 9.700,76.300 9.700,85.300 17.900,86 17.900,97 0,97" fill="#30231f"/>
<polygon points="4.500,77.300 9.500,76.600 9.500,97 4.500,97" fill="#5a3a30"/>
<polygon points="10.500,86 16.500,86.500 16.500,97 10.500,97" fill="#6a5644"/>
<rect x="0" y="92.500" width="65" height="4.500" fill="#14100e" opacity=".8"/>
</g>
<g fill="#fff"><circle cx="27" cy="18.300" r=".95"/><circle cx="32.500" cy="33.800" r=".8"/><circle cx="35.500" cy="35.500" r=".7" opacity=".8"/><circle cx="34.500" cy="41" r=".6" opacity=".8"/><circle cx="30.500" cy="48" r=".8" opacity=".9"/><circle cx="33" cy="45" r=".55" opacity=".7"/><circle cx="22" cy="61.500" r=".65" opacity=".8"/><circle cx="22" cy="77" r=".85"/><circle cx="36" cy="44" r=".5" opacity=".6"/><circle cx="11" cy="86" r=".5" opacity=".7"/><circle cx="32" cy="87.500" r="1.100" fill="#ffd8a0" opacity=".9"/></g>
<rect x="51" y="83.500" width="10" height="9.500" fill="#2a2220" opacity=".75"/><rect x="51" y="83.500" width="10" height="9.500" fill="none" stroke="#ececec" stroke-width="1.100"/><path d="M53 85.900h6M53 88.300h6M53 90.700h6" stroke="#f4f4f4" stroke-width="1.050"/></svg>
<div class="a" style="left:1122.5px;top:236px;width:10px;height:10px;background:none;border:1px solid #8a8a8a"></div>
<div class="a" style="left:1142.1px;top:239.3px;width:2.4px;height:2.4px;background:#c4c4c4;border-radius:1.200px"></div>
<div class="a" style="left:1157.2px;top:239.3px;width:2.4px;height:2.4px;background:#c4c4c4;border-radius:1.200px"></div>
<div class="a" style="left:1172.3px;top:239.3px;width:2.4px;height:2.4px;background:#c4c4c4;border-radius:1.200px"></div>
<div class="a" style="left:1187.3999999999999px;top:239.3px;width:2.4px;height:2.4px;background:#c4c4c4;border-radius:1.200px"></div>
<div class="a" style="left:1202.5px;top:239.3px;width:2.4px;height:2.4px;background:#c4c4c4;border-radius:1.200px"></div>
<div class="t" style="left:1109.7px;top:249.8px;font-size:13.5px;color:#cfcfcf;transform:scaleX(0.8780);">Alexande...g_2.ARW</div>
<svg class="a" style="left:1232px;top:160px;" width="107" height="69" viewBox="0 0 107 69"><defs><linearGradient id="o1" x1="0" y1="0" x2="0" y2="1"><stop offset="0" stop-color="#77797c"/><stop offset=".25" stop-color="#6c6e72"/><stop offset=".6" stop-color="#626465"/><stop offset=".74" stop-color="#33585a"/><stop offset="1" stop-color="#1f4142"/></linearGradient>
<linearGradient id="o2" x1="0" y1="0" x2="1" y2="0"><stop offset="0" stop-color="#4a5560" stop-opacity=".55"/><stop offset=".3" stop-color="#777" stop-opacity=".1"/><stop offset="1" stop-color="#8a8a8a" stop-opacity=".35"/></linearGradient>
<linearGradient id="i1" x1="0" y1="0" x2="0" y2="1"><stop offset="0" stop-color="#cfd5d8"/><stop offset=".25" stop-color="#e4e7e7"/><stop offset=".58" stop-color="#e6ebea"/><stop offset=".68" stop-color="#a8cccc"/><stop offset=".8" stop-color="#4f9ea6"/><stop offset=".95" stop-color="#38868e"/><stop offset="1" stop-color="#c8dcdc"/></linearGradient>
<radialGradient id="mist" cx=".55" cy=".45" r=".5"><stop offset="0" stop-color="#fff" stop-opacity=".9"/><stop offset="1" stop-color="#fff" stop-opacity="0"/></radialGradient>
<filter id="bl2" x="-5%" y="-5%" width="110%" height="110%"><feGaussianBlur stdDeviation=".75"/></filter></defs>
<rect width="107" height="69" fill="url(#o1)"/><rect width="107" height="69" fill="url(#o2)"/>
<g filter="url(#bl2)">
<polygon points="-2,21 14,21.500 22,23 29,24.500 29,27 22,29 18,38 14,50 -2,54" fill="#060708"/>
<polygon points="-2,54 14,50 22,47 22,71 -2,71" fill="#214640"/>
<polygon points="-2,63 8,60 20,62 22,71 -2,71" fill="#5a8a78" opacity=".3"/>
<polygon points="22,59 95,59 95,50 109,44 109,71 22,71" fill="#1e4446"/>
<polygon points="80,71 86,62 96,58 109,47 109,71" fill="#0a0c0c"/>
</g>
<rect x="22" y="10" width="73" height="49" fill="url(#i1)"/>
<g filter="url(#bl2)">
<rect x="30" y="14" width="60" height="32" fill="url(#mist)"/>
<polygon points="22,24.500 40,26 47,27 48,34 42,38 30,40 22,41" fill="#aebcc2" opacity=".85"/>
<path d="M26 27v10M29.500 27v10M33 27.500v9M36.500 27.500v8M40 28v7M43.500 28v6" stroke="#e8eeee" stroke-width="1.200" opacity=".8"/>
<polygon points="22,40 30,39.500 38,42 46,41 52,44 22,46" fill="#e8eeee" opacity=".85"/>
<path d="M22 48h73M22 52h73M22 55.500h73" stroke="#2a6e78" stroke-width="1.300" opacity=".35"/>
</g>
<polygon points="22,23.800 29.800,24.300 30.200,26.300 26,26.800 22,27.800" fill="#0c1014"/>
<polygon points="22,42 26,40.300 27.200,43.300 22,44.800" fill="#182024"/>
<polygon points="66.800,43.500 70.300,41.800 71,45.800 66.300,46" fill="#10181a"/>
<rect x="93" y="55.500" width="10" height="9.500" fill="#1a1a1a" opacity=".7"/><rect x="93" y="55.500" width="10" height="9.500" fill="none" stroke="#ececec" stroke-width="1.100"/><path d="M95 57.900h6M95 60.300h6M95 62.700h6" stroke="#f4f4f4" stroke-width="1.050"/></svg>
<div class="a" style="left:1243px;top:236px;width:10px;height:10px;background:none;border:1px solid #8a8a8a"></div>
<div class="a" style="left:1263.3999999999999px;top:239.3px;width:2.4px;height:2.4px;background:#c4c4c4;border-radius:1.200px"></div>
<div class="a" style="left:1278.5px;top:239.3px;width:2.4px;height:2.4px;background:#c4c4c4;border-radius:1.200px"></div>
<div class="a" style="left:1293.6px;top:239.3px;width:2.4px;height:2.4px;background:#c4c4c4;border-radius:1.200px"></div>
<div class="a" style="left:1308.7px;top:239.3px;width:2.4px;height:2.4px;background:#c4c4c4;border-radius:1.200px"></div>
<div class="a" style="left:1323.3px;top:239.3px;width:2.4px;height:2.4px;background:#c4c4c4;border-radius:1.200px"></div>
<div class="t" style="left:1235.3px;top:249.8px;font-size:13.5px;color:#cfcfcf;transform:scaleX(0.8775);">David_Grover.RAF</div>
<div class="a" style="left:251px;top:58px;width:853px;height:689px;background:#70747e;"></div>
<div class="a" style="left:252px;top:84px;width:851px;height:662px;background:#b8b9bf;"></div>
<div class="a" style="left:251px;top:58px;width:853px;height:26px;background:#60708a;border-top:1px solid #74839b;border-left:1px solid #6c7c94"></div>
<div class="a" style="left:253px;top:84px;width:849px;height:661px;background:#ffffff;"></div>
<svg class="a" style="left:255.5px;top:63.5px;" width="16" height="16" viewBox="0 0 16 16"><defs><radialGradient id="lg2" cx="0.62" cy="0.5" r="0.6"><stop offset="0" stop-color="#a01bd0"/><stop offset="0.45" stop-color="#5a12a8"/><stop offset="0.8" stop-color="#1a1060"/><stop offset="1" stop-color="#0a0a30"/></radialGradient></defs>
<circle cx="8" cy="8" r="7.300" fill="#2f6fe0" opacity=".9"/><circle cx="8" cy="8" r="6" fill="url(#lg2)"/><circle cx="5.600" cy="8" r="3.800" fill="#08061c" opacity=".8"/><path d="M7 4.900l1.700-.8v7.600H7.400V5.900l-.8.400z" fill="#fff"/></svg>
<div class="t" style="left:276.1px;top:65.3px;font-size:12.5px;color:#ffffff;transform:scaleX(0.9833);">Настройки</div>
<svg class="a" style="left:1082px;top:65px;" width="12" height="12" viewBox="0 0 12 12"><path d="M1 1l10 10M11 1L1 11" stroke="#fff" stroke-width="1.300"/></svg>
<div class="a" style="left:332px;top:86px;width:769px;height:53px;border-top:1px solid #b8b8b8;border-bottom:1px solid #adadad;background:linear-gradient(#f1f1f1,#ececec 50%,#e4e4e4)"></div>
<div class="a" style="left:332px;top:86px;width:1px;height:53px;background:#a9a9a9;"></div>
<div class="a" style="left:407px;top:86px;width:2px;height:53px;background:#ababab;"></div>
<div class="a" style="left:484px;top:86px;width:2px;height:53px;background:#ababab;"></div>
<div class="a" style="left:561px;top:86px;width:2px;height:53px;background:#ababab;"></div>
<div class="a" style="left:638px;top:86px;width:2px;height:53px;background:#ababab;"></div>
<div class="a" style="left:715px;top:86px;width:2px;height:53px;background:#ababab;"></div>
<div class="a" style="left:792px;top:86px;width:2px;height:53px;background:#ababab;"></div>
<div class="a" style="left:869px;top:86px;width:2px;height:53px;background:#ababab;"></div>
<div class="a" style="left:946px;top:86px;width:2px;height:53px;background:#ababab;"></div>
<div class="a" style="left:1023px;top:86px;width:2px;height:53px;background:#ababab;"></div>
<div class="a" style="left:1100px;top:86px;width:1.5px;height:53px;background:#ababab;"></div>
<div class="t" style="left:272.5px;top:123.0px;font-size:12px;color:#1c1c1c;transform:scaleX(1.0203);">Общие</div>
<div class="t" style="left:339.5px;top:123.0px;font-size:12px;color:#1c1c1c;transform:scaleX(0.9844);">Внешний...</div>
<div class="t" style="left:416.6px;top:123.0px;font-size:12px;color:#1c1c1c;transform:scaleX(1.0212);">Изображ...</div>
<div class="t" style="left:510.1px;top:123.0px;font-size:12px;color:#1c1c1c;transform:scaleX(0.9960);">Кадр</div>
<div class="t" style="left:587.1px;top:123.0px;font-size:12px;color:#1c1c1c;transform:scaleX(1.0177);">Цвет</div>
<div class="t" style="left:646.5px;top:123.0px;font-size:12px;color:#1c1c1c;transform:scaleX(0.9967);">Экспозиц...</div>
<div class="t" style="left:723.0px;top:123.0px;font-size:12px;color:#1c1c1c;transform:scaleX(0.9913);">Кадриров...</div>
<div class="t" style="left:814.8px;top:123.0px;font-size:12px;color:#1c1c1c;transform:scaleX(1.0156);">Фокус</div>
<div class="t" style="left:876.5px;top:123.0px;font-size:12px;color:#1c1c1c;transform:scaleX(0.9933);">Предупре...</div>
<div class="t" style="left:958.3px;top:123.0px;font-size:12px;color:#1c1c1c;transform:scaleX(1.0075);">Обновить</div>
<div class="t" style="left:1038.3px;top:123.0px;font-size:12px;color:#1c1c1c;transform:scaleX(0.9957);">Плагины</div>
<svg class="a" style="left:279px;top:90px;" width="26" height="26" viewBox="0 0 26 26"><circle cx="13" cy="13" r="10.950" fill="none" stroke="#111" stroke-width="2"/><g transform="translate(1 0.100)"><path d="M9.300 8.600c1.500-.3 2.500-.9 3.100-1.700h1.100v9.200c0 .8.400 1 1.700 1.100v.9H8.900v-.9c1.400-.1 1.900-.3 1.900-1.100V9.700H9.300z" fill="#111"/></g></svg>
<svg class="a" style="left:355px;top:94.800px" width="28.200" height="18" viewBox="0 0 30 19" preserveAspectRatio="none"><path d="M1.300 9.500C5 3.700 10 1.300 15 1.300s10 2.400 13.700 8.200C25 15.300 20 17.700 15 17.700S5 15.300 1.300 9.500z" fill="none" stroke="#111" stroke-width="2"/><circle cx="15" cy="9.500" r="6.400" fill="#111"/></svg>
<svg class="a" style="left:435px;top:96px;" width="22" height="16" viewBox="0 0 22 16"><rect x=".9" y=".9" width="20.200" height="14.200" fill="none" stroke="#111" stroke-width="1.800"/><ellipse cx="11" cy="6" rx="2.800" ry="3.300" fill="#111"/><path d="M4.200 14.600c.2-2.600 1.700-3.500 4.600-4.200l.7-1.900h3l.7 1.900c2.900.7 4.400 1.600 4.600 4.200z" fill="#111"/></svg>
<svg class="a" style="left:512px;top:95px;" width="22" height="18" viewBox="0 0 22 18"><path d="M0 2.500h5l.9-2h6.200l.9 2H22V18H0z" fill="#111"/><rect x="6.800" y="1.200" width="4.400" height="1" fill="#eee"/><circle cx="10.800" cy="9.800" r="4.700" fill="#ededed"/></svg>
<svg class="a" style="left:588px;top:93px;" width="24" height="21" viewBox="0 0 24 21"><g fill="none" stroke="#111" stroke-width="1.800"><circle cx="12" cy="6.600" r="5.600"/><circle cx="6.700" cy="14.300" r="5.600"/><circle cx="17.300" cy="14.300" r="5.600"/></g></svg>
<svg class="a" style="left:664px;top:94px;" width="27" height="19" viewBox="0 0 27 19"><path d="M1.100 17.400V9.800C4 10.400 7 10 9 8.200C11.500 6 13.500 3.500 15.900 1L17.500 4L19.300 3.300L21.100 6.300L22.900 5.300L24.100 7.200L25.300 6.100V17.400z" fill="none" stroke="#111" stroke-width="2" stroke-linejoin="miter"/></svg>
<svg class="a" style="left:741px;top:91px;" width="26" height="26" viewBox="0 0 26 26"><path d="M6 0v19.500h20M0 6h19.700v20" fill="none" stroke="#111" stroke-width="1.900"/></svg>
<svg class="a" style="left:819px;top:95px;" width="23" height="17" viewBox="0 0 23 17"><rect x=".9" y=".9" width="21.200" height="15.200" fill="none" stroke="#111" stroke-width="1.800"/><g fill="#111"><rect x="9.200" y="3.200" width="4.600" height="2.700"/><rect x="9.200" y="7.150" width="4.600" height="2.700"/><rect x="9.200" y="11.100" width="4.600" height="2.700"/><rect x="3.400" y="7.150" width="4.600" height="2.700"/><rect x="15" y="7.150" width="4.600" height="2.700"/></g></svg>
<svg class="a" style="left:895px;top:92px;" width="26" height="24" viewBox="0 0 26 24"><path d="M13 2.600l10.800 19.400H2.200z" fill="none" stroke="#111" stroke-width="1.800" stroke-linejoin="round"/><path d="M10.900 11.800c0-1.400 1-2.100 2.200-2.100 1.300 0 2.200.8 2.200 1.900 0 1.700-2 1.800-2.100 3.600" fill="none" stroke="#111" stroke-width="1.600"/><rect x="12.300" y="16.600" width="1.700" height="1.700" fill="#111"/></svg>
<svg class="a" style="left:973px;top:92px;" width="24" height="24" viewBox="0 0 24 24"><path d="M3.800 6.500A9.700 9.700 0 0 1 21.600 10M20.300 17.500A9.700 9.700 0 0 1 2.400 14" fill="none" stroke="#111" stroke-width="1.700"/><path d="M1 2.800l1.400 6.100 5.600-2z" fill="#111"/><path d="M23 21.200l-1.400-6.100-5.600 2z" fill="#111"/><path d="M9.500 8.800c1.400-.3 2.300-.8 2.900-1.500h1v8.200c0 .7.400.9 1.500 1v.8H9.200v-.8c1.300-.1 1.700-.3 1.700-1V9.800H9.500z" fill="#111"/></svg>
<svg class="a" style="left:1052px;top:92px;" width="20" height="23" viewBox="0 0 20 23"><path d="M1.200 8.200h6.200V6.400c-2.200-1.800-1-5.200 2.200-5.200s4.400 3.400 2.200 5.200v1.800h6.200v5c-1.800-2-4.800-.9-4.800 1.700s3 3.700 4.800 1.700v5H1.200z" fill="none" stroke="#111" stroke-width="2" stroke-linejoin="miter"/></svg>
<div class="t" style="left:270.8px;top:153.8px;font-size:12px;color:#a4a4a4;transform:scaleX(1.0035);">Язык</div>
<div class="a" style="left:271px;top:167px;width:796px;height:1px;background:#cecece;"></div>
<div class="a" style="left:448px;top:182.2px;width:619px;height:21.500px;border:1px solid #acacac;background:linear-gradient(#f3f3f3,#ebebeb 50%,#e1e1e1)"></div>
<div class="t" style="left:453.8px;top:188.0px;font-size:12px;color:#111;transform:scaleX(0.9773);">Русский (Русский)</div>
<svg class="a" style="left:1054.5px;top:190.5px;" width="6" height="4" viewBox="0 0 6 4"><path d="M.5.600l2.500 2.500L5.500.600" fill="none" stroke="#5a5a5a" stroke-width="1.250"/></svg>
<div class="t" style="left:270.8px;top:219.2px;font-size:12px;color:#a4a4a4;transform:scaleX(1.0249);">Просмотр</div>
<div class="a" style="left:271px;top:232px;width:796px;height:1px;background:#cecece;"></div>
<div class="a" style="left:448.3px;top:248.2px;width:13.4px;height:13px;background:#fff;border:1px solid #3c3c3c"></div>
<svg class="a" style="left:448.5px;top:248.2px;" width="13" height="13" viewBox="0 0 13 13"><path d="M2.500 6.300l3.300 3.400 5.100-7.100" fill="none" stroke="#1a1a1a" stroke-width="2"/></svg>
<div class="t" style="left:466.8px;top:249.2px;font-size:12px;color:#111;transform:scaleX(1.0091);">Масштабировать с помощью колеса прокрутки</div>
<div class="a" style="left:448.3px;top:267.5px;width:13.4px;height:13px;background:#fff;border:1px solid #3c3c3c"></div>
<svg class="a" style="left:448.5px;top:267.5px;" width="13" height="13" viewBox="0 0 13 13"><path d="M2.500 6.300l3.300 3.400 5.100-7.100" fill="none" stroke="#1a1a1a" stroke-width="2"/></svg>
<div class="t" style="left:466.8px;top:268.2px;font-size:12px;color:#111;transform:scaleX(0.9868);">Сенсорный ввод всегда перемещает или масштабирует</div>
<div class="t" style="left:270.8px;top:296.5px;font-size:12px;color:#a4a4a4;transform:scaleX(0.9959);">Панели инструментов</div>
<div class="a" style="left:271px;top:309.5px;width:796px;height:1px;background:#cecece;"></div>
<div class="a" style="left:448.3px;top:325.2px;width:13.4px;height:13px;background:#fff;border:1px solid #3c3c3c"></div>
<div class="t" style="left:466.8px;top:326.0px;font-size:12px;color:#111;transform:scaleX(1.0073);">Колесо прокрутки изменяет значение ползунка (Alt+колесо прокручивает вкладку инструментов)</div>
<div class="t" style="left:270.8px;top:354.2px;font-size:12px;color:#a4a4a4;transform:scaleX(0.9686);">Каталог и сессия</div>
<div class="a" style="left:271px;top:367.5px;width:796px;height:1px;background:#cecece;"></div>
<div class="a" style="left:448.3px;top:383px;width:13.4px;height:13px;background:#fff;border:1px solid #3c3c3c"></div>
<div class="t" style="left:466.8px;top:384.0px;font-size:12px;color:#111;transform:scaleX(1.0159);">Открыть в новом окне</div>
<div class="t" style="left:270.8px;top:412.2px;font-size:12px;color:#a4a4a4;transform:scaleX(0.9970);">Коллекция недавних кадров</div>
<div class="a" style="left:271px;top:425.5px;width:796px;height:1px;background:#cecece;"></div>
<div class="t" style="left:399.3px;top:446.2px;font-size:12px;color:#111;transform:scaleX(0.9622);">Создать</div>
<div class="a" style="left:448px;top:440.2px;width:619px;height:21.500px;border:1px solid #acacac;background:linear-gradient(#f3f3f3,#ebebeb 50%,#e1e1e1)"></div>
<div class="t" style="left:453.8px;top:446.0px;font-size:12px;color:#111;transform:scaleX(0.9853);">После более чем 1 час бездействия</div>
<svg class="a" style="left:1054.5px;top:448.5px;" width="6" height="4" viewBox="0 0 6 4"><path d="M.5.600l2.500 2.500L5.500.600" fill="none" stroke="#5a5a5a" stroke-width="1.250"/></svg>
<div class="t" style="left:270.8px;top:477.0px;font-size:12px;color:#a4a4a4;transform:scaleX(1.0416);">Импорт</div>
<div class="a" style="left:271px;top:490.5px;width:796px;height:1px;background:#cecece;"></div>
<div class="a" style="left:448.3px;top:506.2px;width:13.4px;height:13px;background:#fff;border:1px solid #3c3c3c"></div>
<svg class="a" style="left:448.5px;top:506.2px;" width="13" height="13" viewBox="0 0 13 13"><path d="M2.500 6.300l3.300 3.400 5.100-7.100" fill="none" stroke="#1a1a1a" stroke-width="2"/></svg>
<div class="t" style="left:466.8px;top:507.0px;font-size:12px;color:#111;transform:scaleX(1.0063);">Открывать окно импорта при подключении карты памяти фотоаппарата</div>
<div class="t" style="left:270.8px;top:535.0px;font-size:12px;color:#a4a4a4;transform:scaleX(0.9865);">Аппаратное ускорение (используется OpenCL)</div>
<div class="a" style="left:271px;top:548.5px;width:796px;height:1px;background:#cecece;"></div>
<div class="t" style="left:366.3px;top:568.7px;font-size:12px;color:#111;transform:scaleX(1.0109);">Отображения</div>
<div class="a" style="left:448px;top:563px;width:619px;height:21.500px;border:1px solid #acacac;background:linear-gradient(#f3f3f3,#ebebeb 50%,#e1e1e1)"></div>
<div class="t" style="left:453.8px;top:568.8px;font-size:12px;color:#111;transform:scaleX(1.0115);">Авто</div>
<svg class="a" style="left:1054.5px;top:571.3px;" width="6" height="4" viewBox="0 0 6 4"><path d="M.5.600l2.500 2.500L5.500.600" fill="none" stroke="#5a5a5a" stroke-width="1.250"/></svg>
<div class="t" style="left:382.5px;top:595.0px;font-size:12px;color:#111;transform:scaleX(1.0035);">Обработка</div>
<div class="a" style="left:448px;top:589px;width:619px;height:21.500px;border:1px solid #acacac;background:linear-gradient(#f3f3f3,#ebebeb 50%,#e1e1e1)"></div>
<div class="t" style="left:453.8px;top:594.8px;font-size:12px;color:#111;transform:scaleX(1.0115);">Авто</div>
<svg class="a" style="left:1054.5px;top:597.3px;" width="6" height="4" viewBox="0 0 6 4"><path d="M.5.600l2.500 2.500L5.500.600" fill="none" stroke="#5a5a5a" stroke-width="1.250"/></svg>
<div class="t" style="left:445.8px;top:620.0px;font-size:12px;color:#a2a2a2;transform:scaleX(0.9936);">Настройка аппаратного ускорения: 47%.</div>
<div class="t" style="left:270.8px;top:648.0px;font-size:12px;color:#a4a4a4;transform:scaleX(1.0146);">Операции</div>
<div class="a" style="left:271px;top:661.5px;width:796px;height:1px;background:#cecece;"></div>
<div class="a" style="left:448.3px;top:677.2px;width:13.4px;height:13px;background:#fff;border:1px solid #3c3c3c"></div>
<svg class="a" style="left:448.5px;top:677.2px;" width="13" height="13" viewBox="0 0 13 13"><path d="M2.500 6.300l3.300 3.400 5.100-7.100" fill="none" stroke="#1a1a1a" stroke-width="2"/></svg>
<div class="t" style="left:466.8px;top:678.0px;font-size:12px;color:#111;transform:scaleX(1.0090);">Показать окно автоматически</div>
<div class="t" style="left:270.8px;top:705.7px;font-size:12px;color:#a4a4a4;transform:scaleX(0.9697);">Resource Hub</div>
<div class="a" style="left:271px;top:719.5px;width:796px;height:1px;background:#cecece;"></div>
<div class="a" style="left:1073px;top:151px;width:17px;height:582px;background:#efefef;"></div>
<div class="a" style="left:1073px;top:168px;width:17px;height:304.5px;background:#cdcdcd;"></div>
<svg class="a" style="left:1077px;top:157px;" width="9" height="6" viewBox="0 0 9 6"><path d="M.7 5.300l3.800-3.800 3.800 3.800" fill="none" stroke="#a0a0a0" stroke-width="1.400"/></svg>
<svg class="a" style="left:1077px;top:721px;" width="9" height="6" viewBox="0 0 9 6"><path d="M.7.700l3.800 3.800L8.300.700" fill="none" stroke="#8a8a8a" stroke-width="1.400"/></svg>
</body></html>
